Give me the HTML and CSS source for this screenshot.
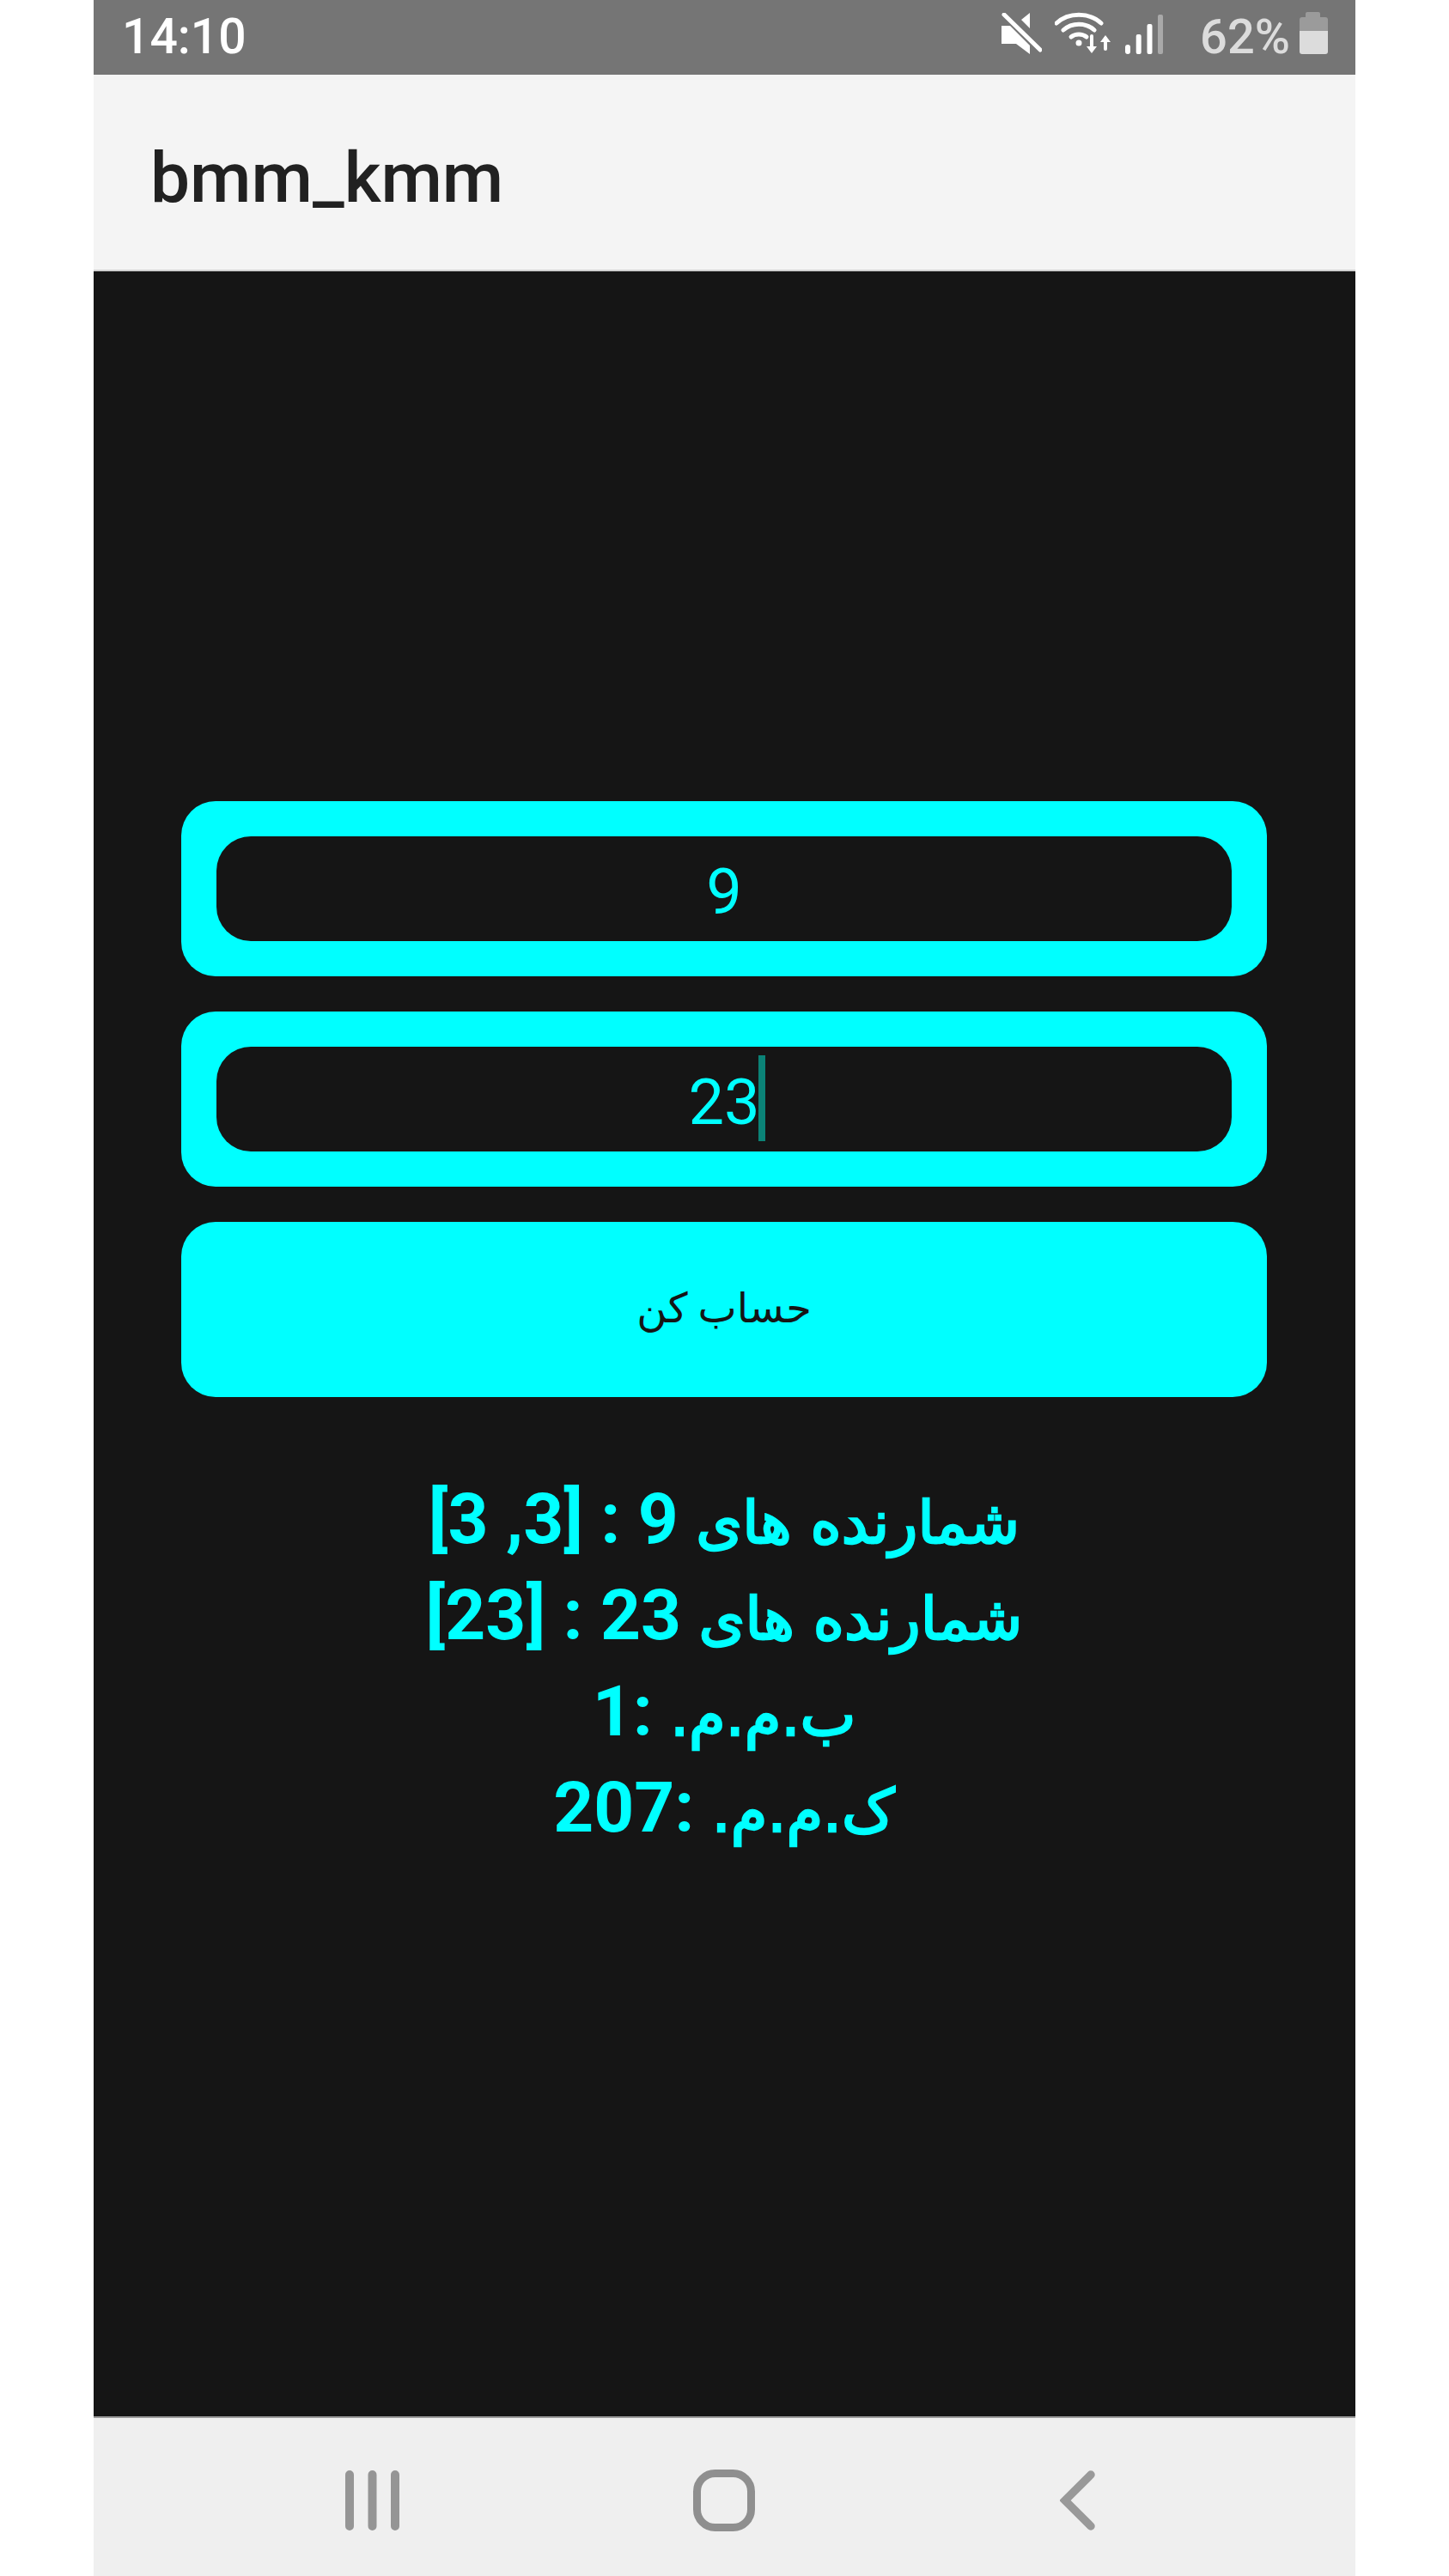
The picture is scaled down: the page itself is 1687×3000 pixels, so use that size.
FILE: index.html
```html
<!DOCTYPE html>
<html lang="en">
<head>
    <meta charset="UTF-8" />
    <meta name="viewport" content="width=device-width, initial-scale=1" />
    <title>bmm_kmm</title>
    <link rel="stylesheet" href="styles.css">
</head>
<body>
    <div class="phone">
        <div class="status-bar">
            <span class="clock">14:10</span>
            <div class="status-icons">
                <!-- muted speaker -->
                <svg class="icon-mute" width="47" height="48" viewBox="0 0 47 48">
                    <path d="M33 0V18L23 8Z" fill="#fff"/>
                    <path d="M0 15H10L33 38V48L17 36H0Z" fill="#fff"/>
                    <path d="M3 2L45 43" stroke="#fff" stroke-width="5" stroke-linecap="round"/>
                </svg>
                <!-- wifi with up and down arrows -->
                <svg class="icon-wifi" width="66" height="50" viewBox="0 0 66 50" fill="none" stroke="#fff" stroke-width="5" stroke-linecap="round">
                    <path d="M2 14C16 1 40 1 54 14"/>
                    <path d="M10 22C20 13 36 13 46 22"/>
                    <path d="M19 30C24 26 32 26 37 30"/>
                    <circle cx="28" cy="37" r="3.5" fill="#fff" stroke="none"/>
                    <path d="M43 29V45" stroke-width="4"/>
                    <path d="M37 41H49L43 49Z" fill="#fff" stroke="none"/>
                    <path d="M59 32V44" stroke-width="4"/>
                    <path d="M53 36H65L59 28Z" fill="#fff" stroke="none"/>
                </svg>
                <!-- signal bars -->
                <svg class="icon-signal" width="44" height="46" viewBox="0 0 44 46">
                    <rect x="0" y="35" width="6" height="11" rx="3" fill="#fff"/>
                    <rect x="12.7" y="23" width="6" height="23" rx="2" fill="#fff"/>
                    <rect x="25.5" y="11" width="6" height="35" rx="2" fill="#fff"/>
                    <rect x="38" y="0" width="6" height="46" rx="2" fill="#a9a9a9"/>
                </svg>
                <span class="percent">62%</span>
                <!-- battery -->
                <svg class="icon-battery" width="33" height="49" viewBox="0 0 33 49">
                    <rect x="7" y="0" width="17" height="9" rx="2" fill="#9b9b9b"/>
                    <path d="M3 6H30Q33 6 33 9V22H0V9Q0 6 3 6Z" fill="#9b9b9b"/>
                    <path d="M0 22H33V46Q33 49 30 49H3Q0 49 0 46Z" fill="#dcdcdc"/>
                </svg>
            </div>
        </div>

        <header class="app-bar">bmm_kmm</header>

        <main class="content">
            <div class="field"><div class="field-inner"><span class="value">9</span></div></div>
            <div class="field"><div class="field-inner"><span class="value">23<i class="caret"></i></span></div></div>
            <div class="calc-button" dir="rtl">حساب کن</div>
            <div class="results" dir="rtl">
                <p><span class="fa">شمارنده های</span> 9 : [3, 3]</p>
                <p><span class="fa">شمارنده های</span> 23 : [23]</p>
                <p><span class="fa">ب.م.م.</span> :1</p>
                <p><span class="fa">ک.م.م.</span> :207</p>
            </div>
        </main>

        <div class="nav-bar">
            <svg class="nav-recent" width="64" height="70" viewBox="0 0 64 70" fill="none" stroke="#959595" stroke-width="10" stroke-linecap="round">
                <path d="M5 5V65M31.5 5V65M58 5V65"/>
            </svg>
            <svg class="nav-home" width="72" height="72" viewBox="0 0 72 72" fill="none" stroke="#8f8f8f" stroke-width="9">
                <rect x="4.5" y="4.5" width="63" height="63" rx="21"/>
            </svg>
            <svg class="nav-back" width="42" height="70" viewBox="0 0 42 70" fill="none" stroke="#999" stroke-width="9.5" stroke-linecap="round" stroke-linejoin="miter">
                <path d="M36 5L6 35L36 65"/>
            </svg>
        </div>
    </div>
</body>
</html>
```

FILE: styles.css
```css
html, body {
    margin: 0;
    background-color: #fff;
}
body {
    height: 3000px;
    overflow: hidden;
    font-family: Roboto, "DejaVu Sans", sans-serif;
}
.phone {
    width: 1469px;
    height: 3000px;
    margin-left: 109px;
    display: flex;
    flex-direction: column;
}
.status-bar {
    height: 87px;
    flex-shrink: 0;
    background-color: #757575;
    display: flex;
    justify-content: space-between;
    align-items: flex-start;
    padding: 0 32px 0 33px;
    box-sizing: border-box;
}
.clock {
    color: #fff;
    font-size: 57px;
    font-weight: 500;
    line-height: 85px;
}
.status-icons {
    display: flex;
    align-items: flex-start;
}
.icon-mute {
    margin-top: 15px;
}
.icon-wifi {
    margin: 13px 0 0 15px;
}
.icon-signal {
    margin: 17px 0 0 16px;
}
.percent {
    color: #dcdcdc;
    font-size: 56px;
    font-weight: 500;
    line-height: 86px;
    margin-left: 43px;
}
.icon-battery {
    margin: 14px 0 0 11px;
}
.app-bar {
    height: 229px;
    flex-shrink: 0;
    box-sizing: border-box;
    background-color: #f4f4f4;
    border-bottom: 2px solid #d0d0d0;
    color: #212121;
    font-size: 82px;
    font-weight: 500;
    line-height: 214px;
    padding: 13px 0 0 66px;
}
.content {
    flex-grow: 1;
    background-color: #151515;
    display: flex;
    flex-direction: column;
    justify-content: center;
    gap: 41px;
    padding: 0 103px 36px 102px;
}
.field {
    background-color: #00ffff;
    border-radius: 40px;
    padding: 41px;
}
.field-inner {
    height: 122px;
    box-sizing: border-box;
    padding-top: 7px;
    background-color: #151515;
    border-radius: 40px;
    display: flex;
    justify-content: center;
    align-items: center;
}
.value {
    position: relative;
    color: #00ffff;
    font-size: 74px;
    line-height: 1;
}
.caret {
    position: absolute;
    left: calc(100% - 2px);
    top: -18px;
    width: 8px;
    height: 100px;
    background-color: #0b8377;
}
.calc-button {
    height: 204px;
    box-sizing: border-box;
    padding-bottom: 4px;
    background-color: #00ffff;
    border-radius: 40px;
    color: #151515;
    font-size: 48px;
    display: flex;
    justify-content: center;
    align-items: center;
}
.results {
    margin-top: 45px;
    color: #00ffff;
    font-size: 82px;
    font-weight: 700;
    line-height: 112px;
    text-align: center;
}
.results p {
    margin: 0;
}
.fa {
    font-family: "DejaVu Sans", sans-serif;
    font-size: 69px;
    font-weight: 400;
    line-height: 1;
    -webkit-text-stroke: 2.5px #00ffff;
}
.nav-bar {
    height: 186px;
    flex-shrink: 0;
    box-sizing: border-box;
    background-color: #efefef;
    border-top: 2px solid #9a9a9a;
    display: flex;
    align-items: center;
    padding: 8px 0 0 293px;
}
.nav-home {
    margin-left: 341px;
}
.nav-back {
    margin-left: 355px;
}
```
